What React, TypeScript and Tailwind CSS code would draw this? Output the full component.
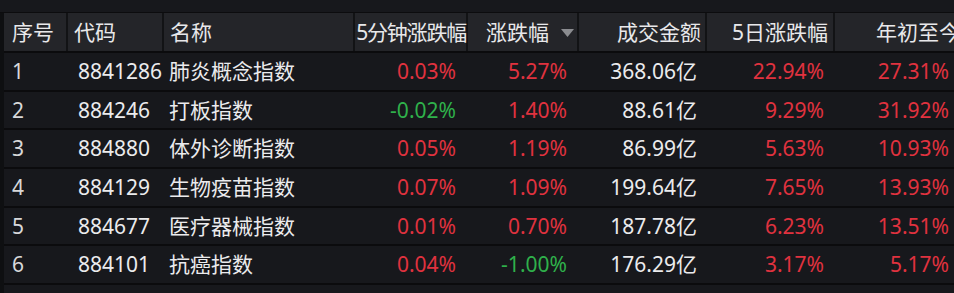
const font = { fontFamily: '"Noto Sans", "Noto Sans CJK SC", sans-serif' }

type Row = {
  no: string
  code: string
  name: string
  m5: string
  chg: string
  amt: string
  d5: string
  ytd: string
}

const rows: Row[] = [
  { no: "1", code: "8841286", name: "肺炎概念指数", m5: "0.03%", chg: "5.27%", amt: "368.06亿", d5: "22.94%", ytd: "27.31%" },
  { no: "2", code: "884246", name: "打板指数", m5: "-0.02%", chg: "1.40%", amt: "88.61亿", d5: "9.29%", ytd: "31.92%" },
  { no: "3", code: "884880", name: "体外诊断指数", m5: "0.05%", chg: "1.19%", amt: "86.99亿", d5: "5.63%", ytd: "10.93%" },
  { no: "4", code: "884129", name: "生物疫苗指数", m5: "0.07%", chg: "1.09%", amt: "199.64亿", d5: "7.65%", ytd: "13.93%" },
  { no: "5", code: "884677", name: "医疗器械指数", m5: "0.01%", chg: "0.70%", amt: "187.78亿", d5: "6.23%", ytd: "13.51%" },
  { no: "6", code: "884101", name: "抗癌指数", m5: "0.04%", chg: "-1.00%", amt: "176.29亿", d5: "3.17%", ytd: "5.17%" },
]

const cols = "grid-cols-[64px_96px_191px_113px_111px_128px_128px_130px]"

// 涨红跌绿
const tone = (v: string) => (v.startsWith("-") ? "text-[#2fb14b]" : "text-[#e0323f]")

export default function App() {
  return (
    <div className="w-[954px] h-[293px] overflow-hidden bg-[#16171b] text-[21px] leading-none" style={font}>
      <div className="h-[13px] bg-[#17181c] border-b border-[#0c0c0e]" />
      <div className="flex">
        <div className="w-[4px] shrink-0 bg-[#0e0f11]" />
        <div className="flex-1 flex flex-col">
          {/* 表头 */}
          <div className={`grid ${cols} h-[38px] bg-[#242529] text-[#e8e8ea]`}>
            <div className="flex items-center pl-[8px] border-r-2 border-[#121315]">序号</div>
            <div className="flex items-center pl-[6px] border-r-2 border-[#121315]">代码</div>
            <div className="flex items-center pl-[6px] border-r-2 border-[#121315]">名称</div>
            <div className="flex items-center justify-end pr-[0px] border-r-2 border-[#121315] whitespace-nowrap tracking-[-1.2px]">5分钟涨跌幅</div>
            <div className="flex items-center pl-[18px] border-r-2 border-[#121315] gap-[12px]">
              <span>涨跌幅</span>
              <svg width="13" height="8" viewBox="0 0 13 8" className="mt-[1px]">
                <polygon points="0,0 13,0 6.5,8" fill="#8b8c90" />
              </svg>
            </div>
            <div className="flex items-center justify-end pr-[4px] border-r-2 border-[#121315]">成交金额</div>
            <div className="flex items-center justify-end pr-[5px] border-r-2 border-[#121315]">5日涨跌幅</div>
            <div className="flex items-center justify-end pr-[5px] whitespace-nowrap">年初至今</div>
          </div>
          {/* 数据行 */}
          {rows.map((r) => (
            <div key={r.no} className={`grid ${cols} h-[38.7px] bg-[#17181c] border-t-2 border-[#0b0b0d] text-[#ebebed]`}>
              <div className="flex items-center pl-[8px] text-[#d8d8da]">{r.no}</div>
              <div className="flex items-center pl-[10px]">{r.code}</div>
              <div className="flex items-center pl-[5px]">{r.name}</div>
              <div className={`flex items-center justify-end pr-[12px] ${tone(r.m5)}`}>{r.m5}</div>
              <div className={`flex items-center justify-end pr-[12px] ${tone(r.chg)}`}>{r.chg}</div>
              <div className="flex items-center justify-end pr-[10px]">{r.amt}</div>
              <div className={`flex items-center justify-end pr-[11px] ${tone(r.d5)}`}>{r.d5}</div>
              <div className={`flex items-center justify-end pr-[16px] ${tone(r.ytd)}`}>{r.ytd}</div>
            </div>
          ))}
          <div className="h-[10px] bg-[#17181c] border-t-2 border-[#0b0b0d]" />
        </div>
      </div>
    </div>
  )
}
